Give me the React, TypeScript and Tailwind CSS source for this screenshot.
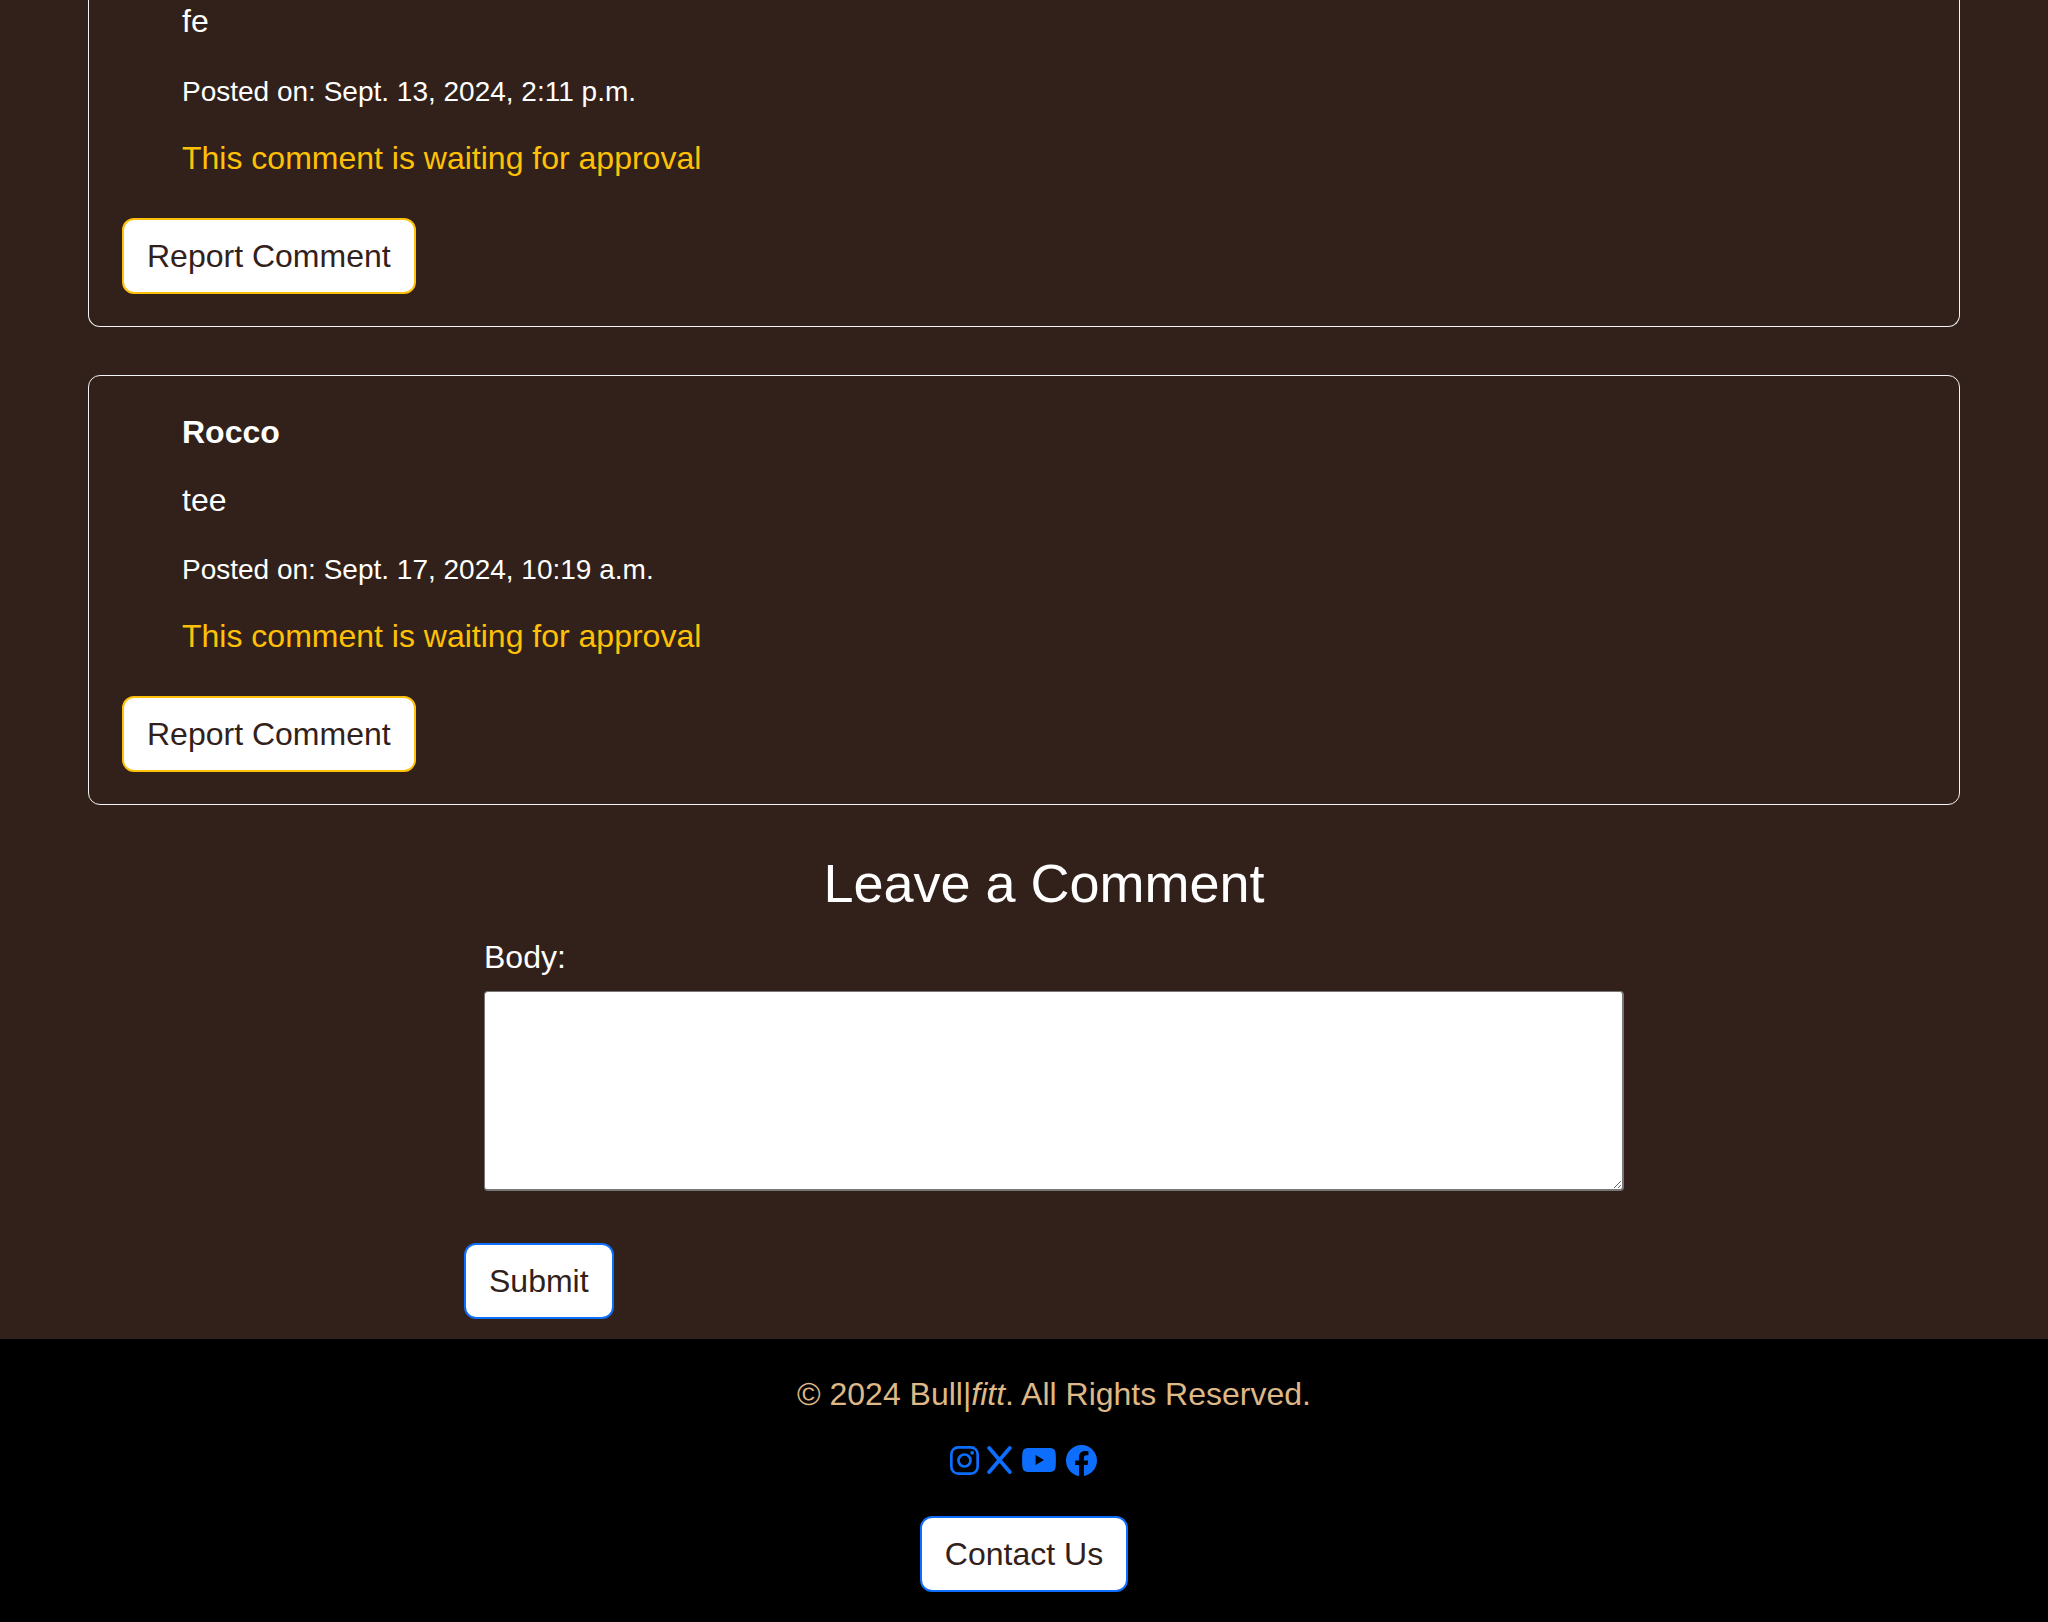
import { BsFacebook } from "react-icons/bs";

type Comment = { author?: string; body: string; posted: string };

const scrolledComment: Comment = { body: "fe", posted: "Sept. 13, 2024, 2:11 p.m." };

const comments: Comment[] = [
  { author: "Rocco", body: "tee", posted: "Sept. 17, 2024, 10:19 a.m." },
];

function CommentDetails({ posted }: { posted: string }) {
  return (
    <>
      <p className="mb-5">
        <small className="text-[28px] leading-none">Posted on: {posted}</small>
      </p>
      <p className="text-[#ffc107]">This comment is waiting for approval</p>
    </>
  );
}

function ReportButton() {
  return (
    <button
      type="button"
      className="mt-9 rounded-xl border-2 border-[#ffc107] bg-white px-[23px] py-3 text-[#32211a]"
    >
      Report Comment
    </button>
  );
}

/* The card whose upper part is above the fold: open at the top edge. */
function OpenCard({ body, posted }: Comment) {
  return (
    <article className="rounded-b-xl border border-t-0 border-[#f3f4f6] px-[33px] pb-8">
      <div className="px-[60px]">
        <p className="mb-6 leading-[42px]">{body}</p>
        <CommentDetails posted={posted} />
      </div>
      <ReportButton />
    </article>
  );
}

function CommentCard({ author, body, posted }: Comment) {
  return (
    <article className="rounded-xl border border-[#f3f4f6] px-[33px] py-8">
      <div className="px-[60px]">
        <p className="mb-5 font-bold">{author}</p>
        <p className="mb-5">{body}</p>
        <CommentDetails posted={posted} />
      </div>
      <ReportButton />
    </article>
  );
}

function Instagram() {
  return (
    <svg viewBox="0 0 28 28" className="size-[29px]" fill="none" stroke="currentColor" strokeWidth="2.6">
      <rect x="1.3" y="1.3" width="25.4" height="25.4" rx="6.6" />
      <circle cx="14" cy="14" r="5.8" />
      <circle cx="21.4" cy="6.6" r="1.8" fill="currentColor" stroke="none" />
    </svg>
  );
}

function XMark() {
  return (
    <svg viewBox="0 0 25 28" className="h-7 w-[25px]" fill="none" stroke="currentColor" strokeWidth="3.8" strokeLinecap="round">
      <path d="M2.2 2 22.8 26M22.8 2 2.2 26" />
    </svg>
  );
}

function YouTube() {
  return (
    <svg viewBox="0 0 34 24" className="h-6 w-[34px]" fill="currentColor">
      <path
        fillRule="evenodd"
        d="M5.5 0H28.5Q33 .2 33.6 5 34.2 12 33.6 19 33 23.8 28.5 24H5.5Q1 23.8 .4 19-.2 12 .4 5 1 .2 5.5 0ZM13.6 7v10L22 12Z"
      />
    </svg>
  );
}

export default function App() {
  return (
    <div className="flex min-h-screen flex-col bg-[#32211a] font-['Liberation_Sans',Arial,sans-serif] text-[32px] leading-[48px] text-white">
      <main className="pb-5">
        <section className="flex flex-col gap-12 px-[88px]">
          <OpenCard {...scrolledComment} />
          {comments.map((c) => (
            <CommentCard key={c.posted} {...c} />
          ))}
        </section>
        <form className="mx-auto mt-12 w-[1120px] max-w-full" onSubmit={(e) => e.preventDefault()}>
          <h3 className="pl-10 text-center text-[54px] leading-[60px]">Leave a Comment</h3>
          <div className="pl-5">
            <label htmlFor="body" className="mt-5 block">
              Body:
            </label>
            <textarea
              id="body"
              className="mt-2.5 block h-[200px] w-[1140px] rounded-sm border-t border-r-2 border-b-2 border-l border-[#767676] bg-white p-1 text-black"
            />
          </div>
          <button
            type="submit"
            className="mt-[52px] rounded-xl border-2 border-[#0d6efd] bg-white px-[23px] py-3 text-[#32211a]"
          >
            Submit
          </button>
        </form>
      </main>
      <footer className="flex grow flex-col items-center bg-black pt-[31px] pb-7">
        <p className="pl-[60px] text-[#deb887]">
          © 2024 Bull|<em>fitt</em>. All Rights Reserved.
        </p>
        <nav className="mt-5 flex h-11 items-center pr-0.5 text-[#0d6efd]">
          <a href="#instagram" aria-label="Instagram">
            <Instagram />
          </a>
          <a href="#x" aria-label="X" className="ml-2">
            <XMark />
          </a>
          <a href="#youtube" aria-label="YouTube" className="ml-2.5">
            <YouTube />
          </a>
          <a href="#facebook" aria-label="Facebook" className="ml-2.5">
            <BsFacebook className="size-[31px]" />
          </a>
        </nav>
        <button
          type="button"
          className="mt-[34px] rounded-xl border-2 border-[#0d6efd] bg-white px-[23px] py-3 text-[#32211a]"
        >
          Contact Us
        </button>
      </footer>
    </div>
  );
}
